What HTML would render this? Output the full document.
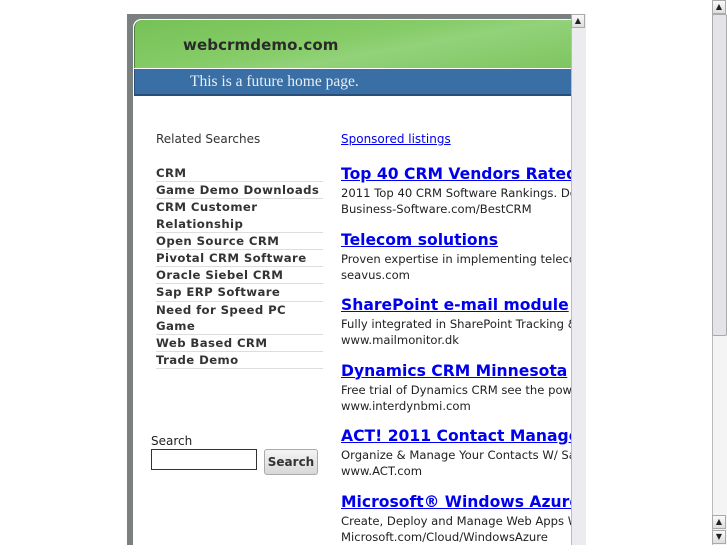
<!DOCTYPE html>
<html><head><meta charset="utf-8"><style>
*{margin:0;padding:0;box-sizing:border-box}
body{width:727px;height:545px;overflow:hidden;background:#fff;position:relative;font-family:"DejaVu Sans","Liberation Sans",sans-serif}
.frame{position:absolute;left:127px;top:14px;width:444px;height:531px;background:#7a7f80;}
.inner{position:absolute;left:133px;top:19px;width:438px;height:526px;background:#fff;border-top-left-radius:8px;overflow:hidden}
.green{position:absolute;left:1px;top:1px;width:437px;height:48px;border-top-left-radius:8px;background:linear-gradient(170deg,#76c257 0%,#86cc68 45%,#92d27a 60%,#7ec561 100%);border-left:1px solid #4f7f3c}
.title{position:absolute;left:48px;top:16px;font-weight:bold;font-size:15px;color:#2a2a2a;letter-spacing:0.1px}
.blue{position:absolute;left:1px;top:50px;width:437px;height:27px;background:#3a6fa6;border-bottom:2px solid #274e78;border-left:1px solid #274e78}
.blue span{position:absolute;left:55px;top:4px;font-family:"Liberation Serif",serif;font-size:15.5px;color:#e8eef5}
.sb{position:absolute;background:#ececf0;border-left:1px solid #bbb}
.btn{position:absolute;width:14px;height:14px;background:linear-gradient(#fafafa,#ddd);border:1px solid #aaa;font-size:8px;text-align:center;line-height:12px;color:#222}
.rel{position:absolute;left:156px;top:132px;font-size:12px;color:#333}
ul{position:absolute;left:156px;top:165px;width:167px;list-style:none}
li{font-size:11.7px;font-weight:bold;color:#333;line-height:16.2px;border-bottom:1px solid #ddd;letter-spacing:0.4px}
.sp{position:absolute;left:341px;top:132px;font-size:12px;color:#00e;text-decoration:underline}
.ads{position:absolute;left:341px;top:163px;width:230px;overflow:hidden;white-space:nowrap}
.ad{height:65.5px;padding-top:1px}
.ad a{display:block;font-size:15.6px;font-weight:bold;color:#00e;text-decoration:underline;line-height:21px}
.ad p{font-size:11.6px;color:#222;line-height:16px}
.sl{position:absolute;left:151px;top:434px;font-size:12px;color:#222}
.inp{position:absolute;left:151px;top:449px;width:106px;height:21px;border:1px solid #333;background:#fff}
.sbtn{position:absolute;left:264px;top:449px;width:54px;height:26px;border:1px solid #aaa;border-radius:3px;background:linear-gradient(#f4f4f4,#d8d8d8);font-size:12px;font-weight:bold;color:#333;text-align:center;line-height:24px}
</style></head><body>
<div class="frame"></div>
<div class="inner">
<div class="green"><div class="title">webcrmdemo.com</div></div>
<div class="blue"><span>This is a future home page.</span></div>
</div>
<div class="sb" style="left:571px;top:14px;width:15px;height:531px"></div>
<div class="btn" style="left:571px;top:14px">▲</div>
<div class="sb" style="left:712px;top:14px;width:15px;height:531px;background:#f4f4f4"></div>
<div style="position:absolute;left:712px;top:14px;width:15px;height:322px;background:#e4e4e8;border:1px solid #aaa;border-radius:2px"></div>
<div class="btn" style="left:712px;top:0">▲</div>
<div class="btn" style="left:712px;top:515px">▲</div>
<div class="btn" style="left:712px;top:530px">▼</div>
<div class="rel">Related Searches</div>
<ul><li>CRM</li><li>Game Demo Downloads</li><li>CRM Customer Relationship</li><li>Open Source CRM</li><li>Pivotal CRM Software</li><li>Oracle Siebel CRM</li><li>Sap ERP Software</li><li>Need for Speed PC Game</li><li>Web Based CRM</li><li>Trade Demo</li></ul>
<div class="sp">Sponsored listings</div>
<div class="ads">
<div class="ad"><a>Top 40 CRM Vendors Rated</a><p>2011 Top 40 CRM Software Rankings. Download</p><p>Business-Software.com/BestCRM</p></div>
<div class="ad"><a>Telecom solutions</a><p>Proven expertise in implementing telecom</p><p>seavus.com</p></div>
<div class="ad"><a>SharePoint e-mail module</a><p>Fully integrated in SharePoint Tracking &amp;</p><p>www.mailmonitor.dk</p></div>
<div class="ad"><a>Dynamics CRM Minnesota</a><p>Free trial of Dynamics CRM see the power</p><p>www.interdynbmi.com</p></div>
<div class="ad"><a>ACT! 2011 Contact Management</a><p>Organize &amp; Manage Your Contacts W/ Sage</p><p>www.ACT.com</p></div>
<div class="ad"><a>Microsoft® Windows Azure</a><p>Create, Deploy and Manage Web Apps W</p><p>Microsoft.com/Cloud/WindowsAzure</p></div>
</div>
<div class="sl">Search</div>
<div class="inp"></div>
<div class="sbtn">Search</div>
</body></html>
